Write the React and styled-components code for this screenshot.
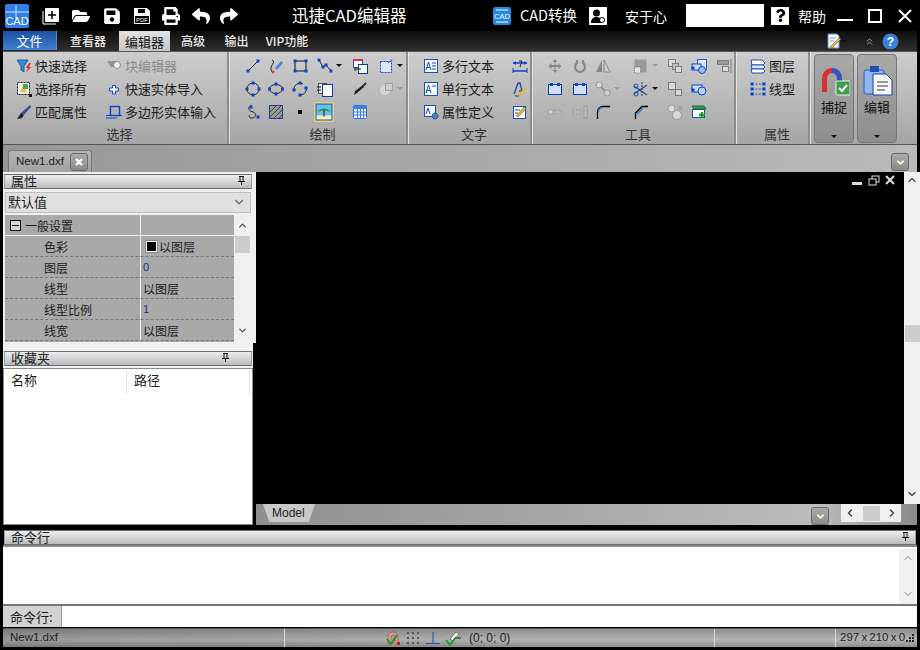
import React from 'react';
import styled, { createGlobalStyle } from 'styled-components';
import { FaFolderOpen, FaSave, FaPrint, FaReply, FaShare, FaQuestion } from 'react-icons/fa';
import { ChevronUp, ChevronDown, ChevronLeft, ChevronRight, ChevronsUp } from 'lucide-react';

const Global = createGlobalStyle`
  html, body { margin: 0; padding: 0; background: #000; }
  * { box-sizing: border-box; }
`;

const CJK = `"Noto Sans CJK SC", "Liberation Sans", sans-serif`;

const Window = styled.div`
  width: 920px;
  height: 650px;
  background: #000;
  display: flex;
  flex-direction: column;
  overflow: hidden;
  font-family: ${CJK};
  font-size: 13px;
  color: #1c1c1c;
  line-height: 1;
`;

/* title bar */
const TitleBar = styled.div`
  height: 31px;
  flex: none;
  display: flex;
  align-items: center;
  color: #fff;
`;
const Logo = styled.svg`
  width: 24px;
  height: 24px;
  margin: 0 13px 0 5px;
  flex: none;
`;
const QuickBtn = styled.span`
  width: 18px;
  margin-right: ${p => p.$gap}px;
  display: flex;
  justify-content: center;
  font-size: 18px;
  flex: none;
`;
const AppTitle = styled.div`
  width: 114px;
  margin-left: 54px;
  font-size: 16.5px;
  white-space: nowrap;
  flex: none;
`;
const TitleRight = styled.div`
  margin-left: 87px;
  display: flex;
  align-items: center;
  font-size: 14px;
`;
const TitleText = styled.span`
  width: ${p => p.$w}px;
  font-size: ${p => p.$size || 14}px;
  margin: ${p => p.$m};
  white-space: nowrap;
  flex: none;
`;
const WhiteBox = styled.span`
  width: ${p => p.$w}px;
  height: ${p => p.$h}px;
  background: #fff;
  color: #000;
  display: flex;
  align-items: center;
  justify-content: center;
  margin: ${p => p.$m};
  flex: none;
`;
const WinBtn = styled.svg`
  width: 16px;
  height: 16px;
  margin-right: 14px;
  flex: none;
`;

/* tab strip */
const TabStrip = styled.div`
  height: 20px;
  margin: 0 3px;
  flex: none;
  display: flex;
  align-items: stretch;
  background: linear-gradient(#0e0e0e, #2e2e2e);
  color: #e8e8e8;
  font-size: 12px;
  font-weight: 500;
`;
const FileTab = styled.div`
  width: 54px;
  height: 19px;
  background: linear-gradient(#1c50a8, #3e7fd0);
  border-right: 1px solid #5d8fd0;
  color: #fff;
  font-size: 13px;
  font-weight: 400;
  display: flex;
  align-items: center;
  justify-content: center;
`;
const Tab = styled.div`
  width: ${p => p.$w}px;
  display: flex;
  align-items: center;
  justify-content: center;
  white-space: nowrap;
  ${p => p.$active && `
    background: linear-gradient(#e2e2e2, #c6c6c6);
    color: #111;
    font-size: 13px;
    font-weight: 400;
  `}
`;
const TabTools = styled.div`
  margin-left: auto;
  display: flex;
  align-items: center;
  padding-right: 18px;
`;

/* ribbon */
const Ribbon = styled.div`
  height: 94px;
  margin: 0 3px;
  flex: none;
  display: flex;
  background: linear-gradient(#cdcdcd, #a6a6a6);
  border-top: 1px solid #555;
  border-bottom: 1px solid #555;
`;
const Group = styled.div`
  width: ${p => p.$w}px;
  flex: none;
  display: flex;
  flex-direction: column;
  padding-top: 2px;
  border-right: 1px solid #e4e4e4;
  box-shadow: inset -2px 0 0 #8c8c8c;
`;
const Rows = styled.div`
  height: 69px;
  display: grid;
  grid-template-columns: ${p => p.$cols};
  grid-auto-rows: 23px;
  align-items: center;
  padding-left: ${p => p.$pad}px;
`;
const GroupLabel = styled.div`
  height: 20px;
  padding-left: 7px;
  display: flex;
  align-items: center;
  justify-content: center;
  color: #333;
`;
const Item = styled.div`
  display: flex;
  align-items: center;
  gap: 3px;
  white-space: nowrap;
  color: ${p => (p.$off ? '#8b8b8b' : '#1c1c1c')};
`;
const IconBtn = styled.div`
  display: flex;
  align-items: center;
  gap: 3px;
  opacity: ${p => (p.$off ? 0.55 : 1)};
`;
const Caret = styled.span`
  width: 0;
  height: 0;
  border-left: 3px solid transparent;
  border-right: 3px solid transparent;
  border-top: 3px solid ${p => (p.$off ? '#777' : '#111')};
`;
const Glyph = styled.svg`
  width: ${p => p.$s || 16}px;
  height: ${p => p.$s || 16}px;
  flex: none;
  display: block;
`;
const Picked = styled.span`
  width: 20px;
  height: 20px;
  margin-left: -3px;
  display: flex;
  align-items: center;
  justify-content: center;
  border: 1px solid #f3cf6a;
  border-radius: 2px;
`;
const BigButtons = styled.div`
  display: flex;
  gap: 3px;
  padding: 2px 0 0 3px;
`;
const BigBtn = styled.div`
  width: 40px;
  height: 89px;
  border: 1px solid #777;
  border-radius: 4px;
  background: linear-gradient(#a9a9a9, #8e8e8e);
  display: flex;
  flex-direction: column;
  color: #111;
`;
const BigBody = styled.div`
  flex: 1;
  padding-top: 9px;
  display: flex;
  flex-direction: column;
  align-items: center;
  gap: 4px;
`;
const BigFoot = styled.div`
  height: 14px;
  flex: none;
  padding-bottom: 4px;
  display: flex;
  align-items: flex-end;
  justify-content: center;
`;

/* document tabs */
const DocBar = styled.div`
  height: 27px;
  margin: 0 3px;
  flex: none;
  display: flex;
  align-items: flex-end;
  background: linear-gradient(90deg, #979797, #bababa);
  padding-left: 5px;
`;
const DocTab = styled.div`
  width: 84px;
  height: 22px;
  display: flex;
  align-items: center;
  justify-content: space-between;
  padding: 0 3px 0 7px;
  background: linear-gradient(#b5b5b5, #a2a2a2);
  border: 1px solid #777;
  border-bottom: none;
  border-radius: 3px 3px 0 0;
  font-family: "Liberation Sans", sans-serif;
  font-size: 11.5px;
  color: #222;
`;
const SquareBtn = styled.span`
  width: 18px;
  height: 18px;
  border: 1px solid #6a6a6a;
  border-radius: 3px;
  background: linear-gradient(#aaa, #8b8b8b);
  display: flex;
  align-items: center;
  justify-content: center;
  flex: none;
`;
const DocMenu = styled(SquareBtn)`
  margin: 0 8px 1px auto;
`;

/* workspace */
const Workspace = styled.div`
  height: 353px;
  flex: none;
  display: flex;
  padding-left: 3px;
`;
const SideColumn = styled.div`
  width: 250px;
  flex: none;
  background: #f0f0f0;
  display: flex;
  flex-direction: column;
`;
const SideTop = styled.div`
  width: 253px;
  height: 171px;
  flex: none;
  padding-top: 2px;
  background: #f0f0f0;
`;
const PanelHead = styled.div`
  height: 15px;
  width: ${p => p.$w ? `${p.$w}px` : 'auto'};
  flex: none;
  margin: ${p => p.$m || '0 1px'};
  padding: 0 ${p => p.$pin}px 2px 6px;
  display: flex;
  align-items: center;
  justify-content: space-between;
  border: 1px solid #6c6c6c;
  border-left-color: #999;
  border-right-color: #999;
  background: linear-gradient(#eceef0, #b9bbbe);
  color: #222;
`;
const Combo = styled.div`
  height: 21px;
  width: 246px;
  margin: 3px 2px 0;
  padding: 0 4px 2px 2px;
  display: flex;
  align-items: center;
  justify-content: space-between;
  background: #e0e0e0;
  border: 1px solid #bdbdbd;
`;
const PropWrap = styled.div`
  height: 127px;
  width: 246px;
  margin: 2px 2px 0;
  display: flex;
  overflow: hidden;
`;
const PropGrid = styled.div`
  width: 229px;
  flex: none;
  background: #a9a9a9;
  font-size: 12px;
`;
const PropRow = styled.div`
  height: 21px;
  display: grid;
  grid-template-columns: 136px 1fr;
  align-items: stretch;
  border-bottom: 1px dashed #777;
  ${p => p.$head && `
    border-bottom: 1px solid #f4f4f4;
  `}
`;
const PropName = styled.div`
  display: flex;
  align-items: center;
  gap: 4px;
  padding: 1px 0 0 ${p => (p.$head ? 5 : 39)}px;
  border-right: 1px solid #f0f0f0;
`;
const PropValue = styled.div`
  display: flex;
  align-items: center;
  gap: 2px;
  padding: 1px 0 0 2px;
  color: ${p => (p.$num ? '#1b2a80' : '#1c1c1c')};
  font-family: ${p => (p.$num ? '"Liberation Sans", sans-serif' : 'inherit')};
  font-size: ${p => (p.$num ? 11 : 12)}px;
`;
const Collapse = styled.span`
  width: 11px;
  height: 11px;
  border: 1px solid #111;
  background: #d8d8d8;
  display: flex;
  align-items: center;
  justify-content: center;
  &::before {
    content: '';
    width: 7px;
    height: 1px;
    background: #111;
  }
`;
const Swatch = styled.span`
  width: 11px;
  height: 11px;
  margin-left: 3px;
  background: #000;
  border: 1px solid #fff;
  box-shadow: 0 0 0 1px #888;
`;
const VScroll = styled.div`
  width: ${p => p.$w || 17}px;
  flex: none;
  background: ${p => p.$bg || '#f0f0f0'};
  display: flex;
  flex-direction: column;
  align-items: center;
  padding: ${p => p.$pad || '5px 0'};
  color: ${p => (p.$dim ? '#b9b9b9' : '#555')};
`;
const Thumb = styled.div`
  width: 15px;
  height: 17px;
  flex: none;
  background: #cdcdcd;
  margin-top: ${p => p.$top}px;
`;
const Push = styled.div`
  margin-top: auto;
`;
const FavList = styled.div`
  flex: 1;
  margin: 2px 0 0;
  background: #fff;
  border: 1px solid #8a8a8a;
`;
const FavHead = styled.div`
  height: 23px;
  margin-top: 2px;
  display: grid;
  grid-template-columns: 123px 123px;
`;
const FavCell = styled.div`
  padding: 2px 0 0 ${p => p.$pad}px;
  display: flex;
  align-items: flex-start;
  border-right: 1px solid #ddd;
`;
const DrawArea = styled.div`
  flex: 1;
  margin-left: 3px;
  display: flex;
  flex-direction: column;
`;
const CanvasRow = styled.div`
  height: 332px;
  display: flex;
`;
const Canvas = styled.div`
  flex: 1;
  background: #000;
  display: flex;
  justify-content: flex-end;
  align-items: flex-start;
  padding: 3px 8px 0 0;
`;
const CanvasTools = styled.svg`
  width: 44px;
  height: 11px;
`;
const SheetBar = styled.div`
  height: 21px;
  margin-right: 3px;
  display: flex;
  align-items: flex-start;
  padding-left: 7px;
  background: linear-gradient(90deg, #8f8f8f, #bcbcbc 85%, #8a8a8a);
`;
const SheetTab = styled.div`
  width: 52px;
  height: 18px;
  padding-left: 9px;
  display: flex;
  align-items: center;
  background: #c8c8c8;
  clip-path: polygon(0 0, 100% 0, 88% 100%, 12% 100%);
  font-family: "Liberation Sans", sans-serif;
  font-size: 12px;
  color: #222;
`;
const SheetMenu = styled(SquareBtn)`
  margin: 3px 0 0 496px;
`;
const HScroll = styled.div`
  width: 60px;
  height: 18px;
  margin-left: 12px;
  background: #f0f0f0;
  display: flex;
  align-items: center;
  justify-content: space-between;
  padding: 0 3px;
  color: #444;
`;
const HThumb = styled.span`
  width: 17px;
  height: 15px;
  background: #cdcdcd;
`;

/* command line */
const CommandBody = styled.div`
  height: 61px;
  margin: 0 3px;
  flex: none;
  display: flex;
  justify-content: flex-end;
  background: #fff;
  border-top: 2px solid #8a8a8a;
  border-bottom: 2px solid #777;
  padding: 2px 1px 0 0;
`;
const InputRow = styled.div`
  height: 21px;
  margin: 0 3px;
  flex: none;
  display: flex;
  background: #fff;
`;
const InputLabel = styled.div`
  width: 59px;
  display: flex;
  align-items: center;
  padding-left: 7px;
  background: #d2d2d2;
  border-right: 1px solid #999;
`;
const StatusBar = styled.div`
  height: 19px;
  margin: 1px 3px 0;
  flex: none;
  display: flex;
  align-items: center;
  border-top: 1px solid #555;
  background: linear-gradient(90deg, rgba(0, 0, 0, 0.14), rgba(0, 0, 0, 0) 60%), linear-gradient(#8e8e8e, #b4b4b4 60%, #8c8c8c);
  font-family: "Liberation Sans", sans-serif;
  font-size: 11.5px;
  color: #222;
`;
const StatusCell = styled.div`
  width: ${p => p.$w}px;
  height: 100%;
  flex: none;
  display: flex;
  align-items: center;
  gap: ${p => p.$gap || 0}px;
  padding-left: ${p => p.$pad || 0}px;
  border-right: ${p => (p.$line ? '1px solid #d8d8d8' : 'none')};
  white-space: nowrap;
`;
const Coords = styled.span`
  margin-left: 4px;
  font-size: 12px;
`;
const PaperSize = styled.span`
  font-size: 11.5px;
  word-spacing: -1px;
  width: 66px;
`;

const B = '#0b44cc';
const Nd = ({ x, y }) => <rect x={x - 1.5} y={y - 1.5} width="3" height="3" fill={B} />;
const Page = ({ x = 5, y = 2, w = 9, h = 12, f = '#fff', s = '#123a9c' }) => (
  <rect x={x + 0.5} y={y + 0.5} width={w} height={h} fill={f} stroke={s} />
);

const icons = {
  funnel: <><path d="M1 2h11L8 8v6L5 12V8z" fill="#2f8fd8" stroke="#1d5c9c" /><path d="M13 5l-3 5h2l-2 5 5-6h-2l2-4z" fill="#e22d2d" /></>,
  selall: <><rect x="1.5" y="1.5" width="12" height="12" fill="#eee" stroke="#111" strokeDasharray="2 1" /><path d="M4 11l3-6 4 6z" fill="#f0c030" /><rect x="7" y="3" width="5" height="5" fill="#46a84a" /><rect x="13" y="13" width="3" height="3" fill="#111" /></>,
  brush: <><path d="M14 1l1 2-7 8-3-2z" fill="#2f4f9f" /><path d="M5 9l3 2-2 3-5 1z" fill="#222" /></>,
  blockedit: <><path d="M1 3h9l2 2-4 4H5z" fill="#8f8f8f" /><circle cx="11" cy="7" r="3.5" fill="#eee" stroke="#888" /></>,
  plus: <path d="M6.5 4.5h3v2.5h3v3h-3v3h-3v-3h-3V7h3z" fill="#fff" stroke={B} />,
  polyin: <><rect x="4.5" y="2.5" width="9" height="9" fill="none" stroke={B} strokeWidth="1.4" /><path d="M0 11.5h16M0 14h11" stroke={B} /></>,
  line: <><path d="M3 13L13 3" stroke="#222" /><Nd x={3} y={13} /><Nd x={13} y={3} /></>,
  splinepen: <><path d="M4 2c5 2-4 6 0 12" fill="none" stroke="#222" /><path d="M7 10l6-7 2 2-6 7z" fill="#3e8ee0" /><circle cx="5" cy="14" r="1.4" fill="#d33" /></>,
  rect: <><rect x="3" y="3" width="11" height="10" fill="none" stroke="#111" /><Nd x={3} y={3} /><Nd x={14} y={3} /><Nd x={3} y={13} /><Nd x={14} y={13} /></>,
  poly: <><path d="M2 2l4 7 3-2 5 6" fill="none" stroke="#222" /><Nd x={2} y={2} /><Nd x={6} y={9} /><Nd x={9} y={7} /><Nd x={14} y={13} /></>,
  copyblock: <><Page x={1} y={1} w={9} h={8} s="#2858b8" /><path d="M1 1h9v2H1z" fill="#d33" /><Page x={6} y={6} w={9} h={9} /><path d="M3 11h6M3 9v4" stroke="#111" /></>,
  dotblock: <><rect x="2.5" y="3.5" width="11" height="11" fill="#dce8fa" stroke={B} strokeDasharray="2 1" /><path d="M10 5l5-4" stroke={B} strokeDasharray="2 1" /></>,
  circle: <><circle cx="8" cy="8" r="6" fill="none" stroke="#222" /><Nd x={8} y={2} /><Nd x={14} y={8} /><Nd x={8} y={14} /><Nd x={2} y={8} /></>,
  ellipse: <><ellipse cx="8" cy="8" rx="6.5" ry="4.5" fill="none" stroke="#222" /><Nd x={8} y={3} /><Nd x={14.5} y={8} /><Nd x={8} y={13} /><Nd x={1.5} y={8} /></>,
  arc: <><path d="M2 9a6 6 0 0 1 9-6M14 6a6 6 0 0 1-5 8" fill="none" stroke="#222" /><Nd x={2} y={9} /><Nd x={8} y={2} /><Nd x={14} y={7} /><Nd x={8} y={14} /></>,
  docs: <><Page x={1} y={2} w={8} h={10} s="#555" f="#e8e8e8" /><Page x={5} y={3} w={10} h={12} /><path d="M0 6h4M0 9h4" stroke="#111" /></>,
  dropper: <><path d="M14 2l-3 3" stroke="#234" strokeWidth="2" /><path d="M11 4l1 2-7 6-3 2 1-4z" fill="#222" /></>,
  copygray: <><circle cx="7" cy="9" r="6" fill="#e8e8e8" stroke="#aaa" /><rect x="7.5" y="2.5" width="7" height="7" fill="#ddd" stroke="#888" /></>,
  spiral: <><path d="M7 2C2 2 3 7 8 8c4 1 3 6-1 6s-3-3-2-3" fill="none" stroke="#222" /><Nd x={6} y={3} /><Nd x={13} y={13} /></>,
  hatch: <><rect x="1.5" y="1.5" width="13" height="13" fill="#999" stroke="#1b3f90" /><path d="M2 8l6-6M2 13L13 2M6 14l8-8M11 14l3-3" stroke="#444" /></>,
  point: <rect x="6" y="6" width="4" height="4" fill="#000" />,
  palm: <><rect x="1" y="1" width="14" height="14" fill="#5cc4ef" stroke="#1d4fa0" strokeWidth=".7" /><rect x="1.5" y="11" width="13" height="3.5" fill="#f6edc0" /><path d="M8 6v6" stroke="#6a4a1a" strokeWidth="1.4" /><path d="M2.5 8c1-4 10-4 11 0-3-2-8-2-11 0z" fill="#1b8a3a" /></>,
  table: <><rect x="1.5" y="1.5" width="13" height="13" rx="1" fill="#eef4ff" stroke="#2f6fe0" /><rect x="2" y="2" width="12" height="3" fill="#3f80e8" /><path d="M2 8h12M2 11h12M5.5 5v9M8.5 5v9M11.5 5v9" stroke="#3f80e8" /></>,
  mtext: <><rect x="1.5" y="1.5" width="13" height="13" fill="#f3f7ff" stroke="#1c4fb0" /><path d="M3 12l2.5-8L8 12M4 9.5h3" fill="none" stroke="#1c4fb0" /><path d="M9 5h4M9 8h4M9 11h4" stroke="#1c4fb0" /></>,
  stext: <><rect x="1.5" y="1.5" width="13" height="13" fill="#f3f7ff" stroke="#1c4fb0" /><path d="M3 12l2.5-8L8 12M4 9.5h3" fill="none" stroke="#1c4fb0" /><path d="M9 5h4" stroke="#1c4fb0" /></>,
  attr: <><rect x="1.5" y="1.5" width="11" height="11" fill="#f3f7ff" stroke="#1c4fb0" /><path d="M3 10l2-6 2 6" fill="none" stroke="#1c4fb0" /><circle cx="12" cy="12" r="3" fill="#4d7cc8" stroke="#234" strokeDasharray="1.5 1" /></>,
  dim: <><path d="M1 13h14M1 5h14" stroke={B} strokeWidth="1.5" /><path d="M1 5l3-2v4zM15 5l-3-2v4z" fill={B} /><path d="M1 10v5M15 10v5" stroke={B} /><path d="M7 3h3l-2 6" fill="none" stroke="#123" /></>,
  textstyle: <><path d="M2 13L6 2h2l2 8H7" fill="none" stroke="#1c4fb0" strokeWidth="1.4" /><path d="M5 14l9-8 1 2-8 7z" fill="#f0b030" /><path d="M3 15h4" stroke="#444" /></>,
  noteedit: <><rect x="1.5" y="2.5" width="12" height="12" fill="#fff" stroke="#1c4fb0" /><path d="M4 12l8-9 2 2-8 8z" fill="#e8b428" stroke="#555" strokeWidth=".5" /><path d="M3 6h5M3 9h3" stroke="#1c4fb0" /></>,
  move: <path d="M8 1l2.5 3h-2v3h3v-2l3 3-3 3v-2h-3v3h2L8 15l-2.5-3h2V9h-3v2l-3-3 3-3v2h3V4h-2z" fill="#555" />,
  rotate: <path d="M5 2v3a5 5 0 1 0 6 0V2" fill="none" stroke="#555" strokeWidth="2.2" />,
  mirror: <><path d="M7 2v12H1z" fill="#555" /><path d="M9 2v12h6z" fill="#ddd" stroke="#555" /></>,
  extend: <><rect x="1.5" y="1.5" width="12" height="13" fill="#777" /><rect x="1.5" y="9" width="6" height="6" fill="#fff" stroke="#333" strokeDasharray="1 1" /></>,
  stack: <><rect x="1.5" y="1.5" width="7" height="7" fill="#eee" stroke="#444" /><rect x="5.5" y="5.5" width="6" height="6" fill="#bbb" stroke="#444" /><rect x="8.5" y="8.5" width="6" height="6" fill="#eee" stroke="#444" /></>,
  clockdoc: <><Page x={6} y={1} w={9} h={10} s="#2a5ac8" f="#d8e6fb" /><rect x="1" y="6" width="9" height="6" fill="#cfe0fb" stroke={B} /><circle cx="11" cy="12" r="3.5" fill="#9cc0f0" stroke={B} /><Nd x={2} y={10} /></>,
  halign: <><rect x="1.5" y="2.5" width="11" height="4" fill="#777" stroke="#444" /><rect x="6.5" y="8.5" width="6" height="5" fill="#eee" stroke="#444" /><path d="M15 1v14" stroke="#444" /></>,
  blue: <><rect x="1.5" y="3.5" width="13" height="10" fill="#cfe0fb" stroke="#0c3aa8" /><rect x="3" y="2" width="3" height="3" fill={B} /><rect x="10" y="2" width="3" height="3" fill={B} /></>,
  chain: <><circle cx="4" cy="4" r="3" fill="#eee" stroke="#777" /><path d="M6 6l5 5" stroke="#777" strokeWidth="2" /><circle cx="12" cy="12" r="3" fill="#ddd" stroke="#777" /></>,
  scissors: <><path d="M1 13L14 4M1 5l13 9" stroke="#1c4fb0" strokeWidth="1.4" /><circle cx="3" cy="13" r="2" fill="none" stroke="#1c4fb0" /><circle cx="3" cy="5" r="2" fill="none" stroke="#1c4fb0" /><path d="M9 1v14" stroke="#333" strokeDasharray="2 1" /></>,
  pair: <><rect x="1.5" y="1.5" width="7" height="7" fill="#eee" stroke="#444" /><rect x="8.5" y="8.5" width="6" height="6" fill="#eee" stroke="#444" /></>,
  clock: <><rect x="1" y="4" width="10" height="7" fill="#cfe0fb" stroke={B} /><circle cx="11" cy="10" r="4" fill="#b8d2f6" stroke={B} /><Nd x={2} y={9} /></>,
  dots: <><rect x="1" y="6" width="5" height="4" fill="#f4f4f4" stroke="#888" /><rect x="8" y="6" width="6" height="4" fill="#bbb" stroke="#888" strokeDasharray="2 1" /></>,
  dotsbar: <><rect x="1" y="6" width="8" height="4" fill="#bbb" stroke="#888" strokeDasharray="2 1" /><rect x="12" y="2" width="3" height="12" fill="#ccc" stroke="#888" /></>,
  fillet: <><path d="M2.5 15V8a5.5 5.5 0 0 1 5.5-5.5h7" fill="none" stroke="#000" strokeWidth="1.3" /><path d="M3.5 8A4.5 4.5 0 0 1 8 3.5" fill="none" stroke="#2f7fe0" strokeWidth="1.5" strokeDasharray="1.5 .5" /></>,
  chamfer: <><path d="M2.5 15V9L9 2.5h6" fill="none" stroke="#000" strokeWidth="1.3" /><path d="M3 11L10 4" stroke="#2f7fe0" strokeWidth="1.6" /></>,
  balls: <><circle cx="4.5" cy="4.5" r="3.5" fill="#fafafa" stroke="#888" /><circle cx="10" cy="11" r="4.5" fill="#fafafa" stroke="#888" /><circle cx="13" cy="4" r="2.5" fill="#999" /></>,
  layeradd: <><path d="M1 2h12l2 3H3z" fill="#38a048" stroke="#1f6a2f" /><rect x="1.5" y="5.5" width="12" height="8" fill="#fff" stroke="#1c4fb0" /><path d="M8 11h6M11 8v6" stroke="#1a9c2a" strokeWidth="2.4" /></>,
  layers: <><path d="M1 2h11l3 3-2 2H2z" fill="#fff" stroke="#1c4fb0" /><path d="M1 7h12l2 2-2 2H2z" fill="#dce8fa" stroke="#1c4fb0" /><path d="M1 11h12l2 2-2 2H2z" fill="#fff" stroke="#1c4fb0" /></>,
  linetype: <><path d="M2 3h12M2 8h12M2 13h12" stroke="#1c4fb0" strokeDasharray="2 1.4" /><Nd x={2} y={3} /><Nd x={14} y={3} /><Nd x={2} y={8} /><Nd x={14} y={8} /><Nd x={2} y={13} /><Nd x={14} y={13} /></>,
  note: <><path d="M3 1h9l2 2v12H3z" fill="#f4f8ff" stroke="#6a90c8" /><path d="M5 14l9-9 2 1-9 9z" fill="#e8c040" stroke="#444" strokeWidth=".5" /><path d="M5 5h6M5 8h4" stroke="#99b" /></>,
  snap: <><path d="M3 14V7a5 5 0 0 1 10 0v7h-3V7a2 2 0 0 0-4 0v7z" fill="#d89a9a" stroke="#c23" strokeWidth=".5" /><path d="M2 9l4 5 6-9" fill="none" stroke="#1a9c2a" strokeWidth="2" /><rect x="12" y="12" width="3" height="3" fill="#d11" /></>,
  gridpts: <path d="M2 2h2v2H2zM7 2h2v2H7zM12 2h2v2h-2zM2 7h2v2H2zM7 7h2v2H7zM12 7h2v2h-2zM2 12h2v2H2zM7 12h2v2H7zM12 12h2v2h-2z" fill="#555" />,
  ortho: <path d="M8 2v11M1 13.5h14" stroke="#1c4fb0" fill="none" />,
  osnap: <><path d="M5 9l6-7 3 2-6 7z" fill="#fff" stroke="#333" strokeWidth=".6" /><path d="M10 8h6" stroke="#222" /><path d="M1 10l4 5 6-8" fill="none" stroke="#1a9c2a" strokeWidth="2" /></>
};

const Ic = ({ n, s }) => <Glyph $s={s} viewBox="0 0 16 16">{icons[n]}</Glyph>;

const Tool = ({ n, off, caret }) => (
  <IconBtn $off={off}>
    <Ic n={n} />
    {caret && <Caret $off={off} />}
  </IconBtn>
);

const Pin = () => (
  <Glyph $s={9} viewBox="0 0 9 9">
    <path d="M2 .5h5M3 .5v4.5M6 .5v4.5M1 5.5h7M4.5 5.5V9" stroke="#111" fill="none" />
  </Glyph>
);

const drawTools = [
  ['line'], ['splinepen'], ['rect'], ['poly', 0, 1], ['copyblock'], ['dotblock', 0, 1],
  ['circle'], ['ellipse'], ['arc'], ['docs'], ['dropper'], ['copygray', 1, 1]
];
const editTools = [
  ['move', 1], ['rotate', 1], ['mirror', 1], ['extend', 1, 1], ['stack', 1], ['clockdoc'], ['halign', 1],
  ['blue'], ['blue'], ['chain', 1, 1], ['scissors', 0, 1], ['pair', 1], ['clock'], null,
  ['dots', 1], ['dotsbar', 1], ['fillet'], ['chamfer'], ['balls', 1], ['layeradd'], null
];
const props = [
  ['色彩', '以图层', 'swatch'],
  ['图层', '0', 'num'],
  ['线型', '以图层'],
  ['线型比例', '1', 'num'],
  ['线宽', '以图层']
];

export default function App() {
  return (
    <Window>
      <Global />
      <TitleBar>
        <Logo viewBox="0 0 24 24">
          <rect width="24" height="24" rx="2" fill="#2f7fea" />
          <path d="M0 8h24M11 1v13" stroke="#cfe4ff" strokeWidth="1" />
          <text x="12" y="21" fontSize="11" fill="#fff" textAnchor="middle" fontFamily="Liberation Sans">CAD</text>
        </Logo>
        <QuickBtn $gap={12}>
          <Glyph $s={18} viewBox="0 0 18 18">
            <rect x="3" y="1" width="14" height="14" rx="1" fill="#fff" />
            <path d="M1 4v13h13" fill="none" stroke="#fff" />
            <path d="M10 4v8M6 8h8" stroke="#000" strokeWidth="1.6" />
          </Glyph>
        </QuickBtn>
        <QuickBtn $gap={13}><FaFolderOpen /></QuickBtn>
        <QuickBtn $gap={12}><FaSave /></QuickBtn>
        <QuickBtn $gap={11}>
          <Glyph $s={18} viewBox="0 0 18 18">
            <path d="M1 1h13l3 3v13H1z" fill="#fff" />
            <rect x="5" y="2" width="7" height="4" fill="#000" />
            <rect x="2" y="9" width="14" height="7" fill="#000" />
            <text x="9" y="15" fontSize="6" fill="#fff" textAnchor="middle" fontFamily="Liberation Sans">PDF</text>
          </Glyph>
        </QuickBtn>
        <QuickBtn $gap={12}><FaPrint /></QuickBtn>
        <QuickBtn $gap={10}><FaReply /></QuickBtn>
        <QuickBtn $gap={0}><FaShare /></QuickBtn>
        <AppTitle>迅捷CAD编辑器</AppTitle>
        <TitleRight>
          <Glyph $s={18} viewBox="0 0 18 18">
            <rect width="18" height="18" rx="2" fill="#1f8ae0" />
            <path d="M3 3h12M3 15h12" stroke="#fff" />
            <text x="9" y="12" fontSize="7.5" fill="#fff" textAnchor="middle" fontFamily="Liberation Sans">CAD</text>
          </Glyph>
          <TitleText $size={14.5} $w={58} $m="0 11px 0 9px">CAD转换</TitleText>
          <WhiteBox $w={18} $h={18} $m="0 18px 0 0">
            <Glyph $s={16} viewBox="0 0 16 16">
              <circle cx="6.5" cy="5" r="3.5" fill="#000" />
              <path d="M1 15c0-5 3-6 5.5-6s4 1 4.5 2v4z" fill="#000" />
              <circle cx="12" cy="12" r="2.5" fill="#fff" stroke="#000" />
            </Glyph>
          </WhiteBox>
          <TitleText $w={42} $m="0 19px 0 0">安于心</TitleText>
          <WhiteBox $w={78} $h={23} $m="0 7px 0 0" />
          <WhiteBox $w={18} $h={18} $m="0 9px 0 0"><FaQuestion size={13} /></WhiteBox>
          <TitleText $w={28} $m="0 11px 0 0">帮助</TitleText>
          <WinBtn viewBox="0 0 16 16"><path d="M0 12h16" stroke="#fff" strokeWidth="2" /></WinBtn>
          <WinBtn viewBox="0 0 16 16"><rect x="2" y="2" width="12" height="12" fill="none" stroke="#fff" strokeWidth="2" /></WinBtn>
          <WinBtn viewBox="0 0 16 16"><path d="M2 2l12 12M14 2L2 14" stroke="#fff" strokeWidth="2" /></WinBtn>
        </TitleRight>
      </TitleBar>

      <TabStrip>
        <FileTab>文件</FileTab>
        <Tab $w={62}>查看器</Tab>
        <Tab $w={51} $active>编辑器</Tab>
        <Tab $w={46}>高级</Tab>
        <Tab $w={41}>输出</Tab>
        <Tab $w={60}>VIP功能</Tab>
        <TabTools>
          <Ic n="note" />
          <Caret />
          <ChevronsUp size={11} color="#aaa" style={{ margin: '0 7px 0 17px' }} />
          <Glyph $s={17} viewBox="0 0 17 17">
            <circle cx="8.5" cy="8.5" r="8" fill="#3c7fd8" />
            <text x="8.5" y="13" fontSize="12" fontWeight="700" fill="#fff" textAnchor="middle" fontFamily="Liberation Sans">?</text>
          </Glyph>
        </TabTools>
      </TabStrip>

      <Ribbon>
        <Group $w={227}>
          <Rows $pad={13} $cols="90px 1fr">
            <Item><Ic n="funnel" />快速选择</Item>
            <Item $off><Ic n="blockedit" />块编辑器</Item>
            <Item><Ic n="selall" />选择所有</Item>
            <Item><Ic n="plus" />快速实体导入</Item>
            <Item><Ic n="brush" />匹配属性</Item>
            <Item><Ic n="polyin" />多边形实体输入</Item>
          </Rows>
          <GroupLabel>选择</GroupLabel>
        </Group>
        <Group $w={179}>
          <Rows $pad={15} $cols="23px 24px 25px 35px 26px 1fr">
            {drawTools.map(([n, off, caret], i) => <Tool key={i} n={n} off={off} caret={caret} />)}
            <Tool n="spiral" />
            <Tool n="hatch" />
            <Tool n="point" />
            <Picked><Ic n="palm" s={18} /></Picked>
            <Tool n="table" />
          </Rows>
          <GroupLabel>绘制</GroupLabel>
        </Group>
        <Group $w={124}>
          <Rows $pad={14} $cols="89px 1fr">
            <Item><Ic n="mtext" />多行文本</Item>
            <Tool n="dim" />
            <Item><Ic n="stext" />单行文本</Item>
            <Tool n="textstyle" />
            <Item><Ic n="attr" />属性定义</Item>
            <Tool n="noteedit" />
          </Rows>
          <GroupLabel>文字</GroupLabel>
        </Group>
        <Group $w={204}>
          <Rows $pad={14} $cols="25px 23px 38px 34px 24px 25px 1fr">
            {editTools.map((t, i) => (t ? <Tool key={i} n={t[0]} off={t[1]} caret={t[2]} /> : <span key={i} />))}
          </Rows>
          <GroupLabel>工具</GroupLabel>
        </Group>
        <Group $w={74}>
          <Rows $pad={13} $cols="1fr">
            <Item><Ic n="layers" />图层</Item>
            <Item><Ic n="linetype" />线型</Item>
          </Rows>
          <GroupLabel>属性</GroupLabel>
        </Group>
        <BigButtons>
          <BigBtn>
            <BigBody>
              <Glyph $s={32} viewBox="0 0 32 32">
                <path d="M4 28V14a10 10 0 0 1 20 0v5h-5v-5a5 5 0 0 0-10 0v14z" fill="#d83030" />
                <path d="M14 4a10 10 0 0 1 10 10v5h-5v-5a5 5 0 0 0-5-5z" fill="#2f55c8" />
                <rect x="18" y="17" width="14" height="14" rx="1" fill="#3ca048" stroke="#eee" />
                <path d="M21 24l3 3 5-6" fill="none" stroke="#fff" strokeWidth="2" />
              </Glyph>
              捕捉
            </BigBody>
            <BigFoot><Caret /></BigFoot>
          </BigBtn>
          <BigBtn>
            <BigBody>
              <Glyph $s={32} viewBox="0 0 32 32">
                <rect x="3" y="6" width="20" height="24" rx="2" fill="#8fb8f0" stroke="#2a58b0" />
                <rect x="9" y="2" width="9" height="6" fill="#1c4fb8" />
                <path d="M12 10h13l6 6v15H12z" fill="#f4f6fa" stroke="#1c3f9c" />
                <path d="M16 18h11M16 22h11M16 26h8" stroke="#777" strokeWidth="1.4" />
              </Glyph>
              编辑
            </BigBody>
            <BigFoot><Caret /></BigFoot>
          </BigBtn>
        </BigButtons>
      </Ribbon>

      <DocBar>
        <DocTab>
          New1.dxf
          <SquareBtn>
            <Glyph $s={10} viewBox="0 0 10 10"><path d="M2 2l6 6M8 2L2 8" stroke="#fff" strokeWidth="2.4" /></Glyph>
          </SquareBtn>
        </DocTab>
        <DocMenu><ChevronDown size={11} strokeWidth={4} color="#fff6d0" /></DocMenu>
      </DocBar>

      <Workspace>
        <SideColumn>
          <SideTop>
            <PanelHead $pin={5} $w={248}>属性<Pin /></PanelHead>
            <Combo>默认值<ChevronDown size={14} color="#666" /></Combo>
            <PropWrap>
              <PropGrid>
                <PropRow $head>
                  <PropName $head><Collapse />一般设置</PropName>
                  <PropValue />
                </PropRow>
                {props.map(([name, value, kind]) => (
                  <PropRow key={name}>
                    <PropName>{name}</PropName>
                    <PropValue $num={kind === 'num'}>
                      {kind === 'swatch' && <Swatch />}
                      {value}
                    </PropValue>
                  </PropRow>
                ))}
              </PropGrid>
              <VScroll>
                <ChevronUp size={11} strokeWidth={3} />
                <Thumb $top={5} />
                <Push><ChevronDown size={11} strokeWidth={3} /></Push>
              </VScroll>
            </PropWrap>
          </SideTop>
          <PanelHead $pin={21} $m="8px 1px 0">收藏夹<Pin /></PanelHead>
          <FavList>
            <FavHead>
              <FavCell $pad={7}>名称</FavCell>
              <FavCell $pad={7}>路径</FavCell>
            </FavHead>
          </FavList>
        </SideColumn>
        <DrawArea>
          <CanvasRow>
            <Canvas>
              <CanvasTools viewBox="0 0 44 11">
                <rect x="0" y="7" width="10" height="3" fill="#ddd" />
                <rect x="20" y="1" width="7" height="6" fill="none" stroke="#ddd" />
                <rect x="17" y="4" width="7" height="6" fill="#000" stroke="#ddd" />
                <path d="M34 1l8 8M42 1l-8 8" stroke="#ddd" strokeWidth="2" />
              </CanvasTools>
            </Canvas>
            <VScroll $w={16} $pad="2px 0 3px">
              <ChevronUp size={12} strokeWidth={3} />
              <Thumb $top={139} />
              <Push><ChevronDown size={12} strokeWidth={3} /></Push>
            </VScroll>
          </CanvasRow>
          <SheetBar>
            <SheetTab>Model</SheetTab>
            <SheetMenu><ChevronDown size={11} strokeWidth={4} color="#fff6d0" /></SheetMenu>
            <HScroll>
              <ChevronLeft size={12} strokeWidth={3} />
              <HThumb />
              <ChevronRight size={12} strokeWidth={3} />
            </HScroll>
          </SheetBar>
        </DrawArea>
      </Workspace>

      <PanelHead $pin={5} $m="5px 4px 0">命令行<Pin /></PanelHead>
      <CommandBody>
        <VScroll $dim $pad="3px 0">
          <ChevronUp size={12} strokeWidth={3} />
          <Push><ChevronDown size={12} strokeWidth={3} /></Push>
        </VScroll>
      </CommandBody>
      <InputRow>
        <InputLabel>命令行:</InputLabel>
      </InputRow>
      <StatusBar>
        <StatusCell $w={282} $pad={7} $line>New1.dxf</StatusCell>
        <StatusCell $w={430} $pad={100} $gap={4} $line>
          <Ic n="snap" />
          <Ic n="gridpts" />
          <Ic n="ortho" />
          <Ic n="osnap" />
          <Coords>(0; 0; 0)</Coords>
        </StatusCell>
        <StatusCell $w={121} $line />
        <StatusCell $w={80} $pad={4}>
          <PaperSize>297 x 210 x 0</PaperSize>
          <Glyph $s={9} viewBox="0 0 9 9"><path d="M6 0h2v2H6zM3 3h2v2H3zM6 3h2v2H6zM0 6h2v2H0zM3 6h2v2H3zM6 6h2v2H6z" fill="#222" /></Glyph>
        </StatusCell>
      </StatusBar>
    </Window>
  );
}
